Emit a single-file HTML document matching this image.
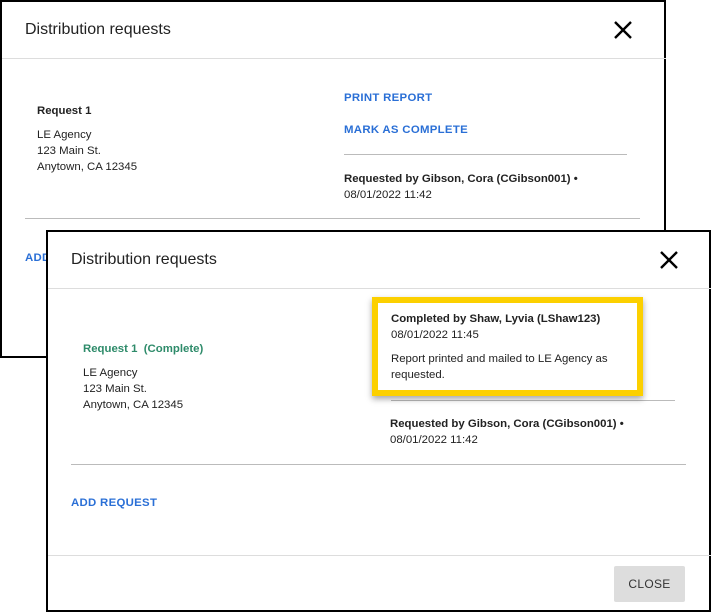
<!DOCTYPE html>
<html><head><style>
body{margin:0;width:711px;height:612px;position:relative;background:#fff;font-family:"Liberation Sans",Arial,sans-serif;overflow:hidden}
.a{position:absolute;white-space:nowrap}
.d{position:absolute;background:#fff;border:2px solid #000;box-sizing:border-box}
.t{font-size:16px;color:#222}
.s{font-size:11.4px;color:#222;line-height:16px}
.b{font-weight:bold}
.lk{font-size:11.4px;font-weight:bold;color:#2a6fd6;letter-spacing:.3px}
.hl{position:absolute;height:1px;background:#ddd}
.gl{position:absolute;height:1px;background:#bbb}
</style></head><body>
<div class="d" style="left:0;top:0;width:666px;height:358px">
 <div class="a t" style="left:23px;top:19px">Distribution requests</div>
 <div class="hl" style="left:0;top:56px;width:664px"></div>
 <div class="a s b" style="left:35px;top:101px">Request 1</div>
 <div class="a s" style="left:35px;top:125px">LE Agency<br>123 Main St.<br>Anytown, CA 12345</div>
 <div class="a lk" style="left:342px;top:90px">PRINT REPORT</div>
 <div class="a lk" style="left:342px;top:122px">MARK AS COMPLETE</div>
 <div class="gl" style="left:342px;top:152px;width:283px"></div>
 <div class="a s b" style="left:342px;top:169px">Requested by Gibson, Cora (CGibson001) •</div>
 <div class="a s" style="left:342px;top:185px">08/01/2022 11:42</div>
 <div class="gl" style="left:23px;top:216px;width:615px"></div>
 <div class="a lk" style="left:23px;top:250px">ADD</div>
</div>
<svg style="position:absolute;left:613px;top:20px" width="20" height="20"><path d="M2 2L18 18M18 2L2 18" stroke="#000" stroke-width="2.4"/></svg>
<div class="d" style="left:46px;top:230px;width:665px;height:382px">
 <div class="a t" style="left:23px;top:19px">Distribution requests</div>
 <div class="hl" style="left:0;top:56px;width:663px"></div>
 <div class="a s b" style="left:35px;top:109px;color:#2e8b6a">Request 1&nbsp; (Complete)</div>
 <div class="a s" style="left:35px;top:133px">LE Agency<br>123 Main St.<br>Anytown, CA 12345</div>
 <div class="gl" style="left:343px;top:168px;width:284px"></div>
 <div class="a s b" style="left:342px;top:184px">Requested by Gibson, Cora (CGibson001) •</div>
 <div class="a s" style="left:342px;top:200px">08/01/2022 11:42</div>
 <div class="gl" style="left:23px;top:232px;width:615px"></div>
 <div class="a lk" style="left:23px;top:265px">ADD REQUEST</div>
 <div class="hl" style="left:0;top:323px;width:663px"></div>
 <div class="a" style="left:566px;top:334px;width:71px;height:36px;background:#ddd;border-radius:2px;font-size:12px;color:#333;text-align:center;line-height:36px;letter-spacing:.3px">CLOSE</div>
</div>
<svg style="position:absolute;left:659px;top:250px" width="20" height="20"><path d="M2 2L18 18M18 2L2 18" stroke="#000" stroke-width="2.4"/></svg>
<div style="position:absolute;left:372px;top:297px;width:271px;height:99px;border:6px solid #fcd000;box-sizing:border-box;background:#fff;box-shadow:0 3px 6px rgba(0,0,0,.35)">
 <div class="a s b" style="left:13px;top:8px">Completed by Shaw, Lyvia (LShaw123)</div>
 <div class="a s" style="left:13px;top:24px">08/01/2022 11:45</div>
 <div class="a s" style="left:13px;top:48px">Report printed and mailed to LE Agency as<br>requested.</div>
</div>
</body></html>
